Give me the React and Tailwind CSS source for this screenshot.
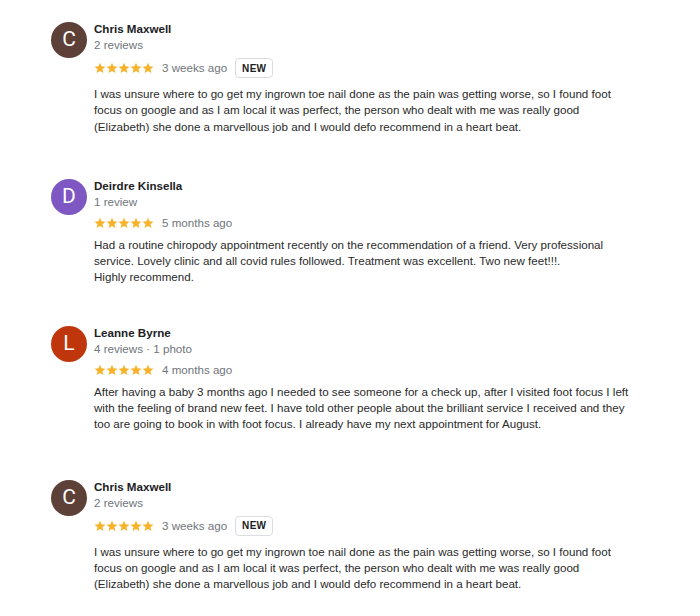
import React from "react";

const Star = () => (
  <svg width="12" height="12" viewBox="0 0 24 24" className="block">
    <path
      fill="#f6b32b"
      d="M12 1.5l3.1 7.2 7.8.7-5.9 5.1 1.8 7.6L12 18.1l-6.8 4 1.8-7.6L1.1 9.4l7.8-.7z"
    />
  </svg>
);

const reviews = [
  {
    name: "Chris Maxwell",
    letter: "C",
    color: "bg-[#5d4037]",
    meta: "2 reviews",
    time: "3 weeks ago",
    isNew: true,
    lines: [
      "I was unsure where to go get my ingrown toe nail done as the pain was getting worse, so I found foot",
      "focus on google and as I am local it was perfect, the person who dealt with me was really good",
      "(Elizabeth) she done a marvellous job and I would defo recommend in a heart beat.",
    ],
    mb: "mb-[43px]",
  },
  {
    name: "Deirdre Kinsella",
    letter: "D",
    color: "bg-[#7e57c2]",
    meta: "1 review",
    time: "5 months ago",
    isNew: false,
    lines: [
      "Had a routine chiropody appointment recently on the recommendation of a friend. Very professional",
      "service. Lovely clinic and all covid rules followed. Treatment was excellent. Two new feet!!!.",
      "Highly recommend.",
    ],
    mb: "mb-[39px]",
  },
  {
    name: "Leanne Byrne",
    letter: "L",
    color: "bg-[#bf360c]",
    meta: "4 reviews · 1 photo",
    time: "4 months ago",
    isNew: false,
    lines: [
      "After having a baby 3 months ago I needed to see someone for a check up, after I visited foot focus I left",
      "with the feeling of brand new feet. I have told other people about the brilliant service I received and they",
      "too are going to book in with foot focus. I already have my next appointment for August.",
    ],
    mb: "mb-[46px]",
  },
  {
    name: "Chris Maxwell",
    letter: "C",
    color: "bg-[#5d4037]",
    meta: "2 reviews",
    time: "3 weeks ago",
    isNew: true,
    lines: [
      "I was unsure where to go get my ingrown toe nail done as the pain was getting worse, so I found foot",
      "focus on google and as I am local it was perfect, the person who dealt with me was really good",
      "(Elizabeth) she done a marvellous job and I would defo recommend in a heart beat.",
    ],
    mb: "mb-0",
  },
];

function Review({ r }) {
  return (
    <div className={`flex gap-[7px] ${r.mb}`}>
      <div
        className={`w-[36px] h-[36px] rounded-full ${r.color} flex items-center justify-center text-white text-[21px] mt-[1px] shrink-0 font-['Roboto',sans-serif]`}
      >
        {r.letter}
      </div>
      <div className="flex flex-col">
        <div className="text-[11.6px] leading-[16px] font-bold text-[#202124]">{r.name}</div>
        <div className="text-[11.6px] leading-[16px] text-[#70757a]">{r.meta}</div>
        <div className="flex items-center mt-[5px]">
          <div className="flex">
            <Star />
            <Star />
            <Star />
            <Star />
            <Star />
          </div>
          <span className="ml-[8px] text-[11.6px] leading-[16px] text-[#70757a]">{r.time}</span>
          {r.isNew && (
            <span className="ml-[8px] h-[20px] px-[6px] border border-[#dadce0] rounded-[4px] text-[10px] font-bold text-[#202124] flex items-center tracking-[0.3px]">
              NEW
            </span>
          )}
        </div>
        <div
          className={`${r.isNew ? "mt-[8px]" : "mt-[6px]"} text-[11.6px] leading-[16.3px] text-[#2a2a2a]`}
        >
          {r.lines.map((l, i) => (
            <div key={i} className="whitespace-nowrap">
              {l}
            </div>
          ))}
        </div>
      </div>
    </div>
  );
}

export default function App() {
  return (
    <div className="w-[700px] h-[616px] bg-white font-['Liberation_Sans',Arial,sans-serif] pl-[51px] pt-[21px]">
      {reviews.map((r, i) => (
        <Review key={i} r={r} />
      ))}
    </div>
  );
}
